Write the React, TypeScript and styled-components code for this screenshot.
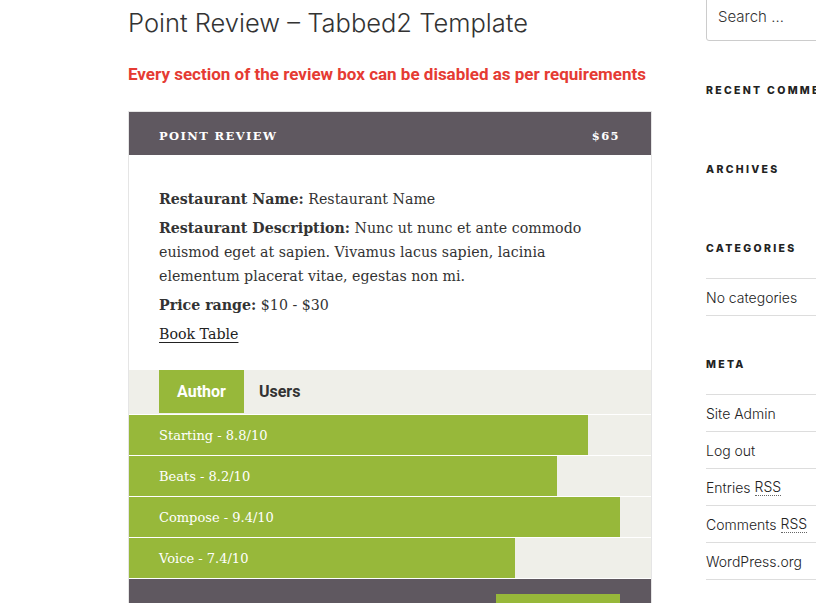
import React from "react";
import styled, { createGlobalStyle } from "styled-components";

const Global = createGlobalStyle`
  html, body { margin: 0; padding: 0; background: #fff; }
  body { overflow: hidden; }
  * { box-sizing: border-box; }
`;

const slab = `"DejaVu Serif", "Liberation Serif", serif`;
const franklin = `Inter, "Noto Sans", sans-serif`;

const Page = styled.div`
  display: grid;
  grid-template-columns: 524px 1fr;
  column-gap: 54px;
  padding-left: 128px;
  width: 816px;
  height: 603px;
  overflow: hidden;
`;

const Main = styled.main`
  display: flex;
  flex-direction: column;
`;

const Title = styled.h1`
  margin: 6px 0 0;
  font-family: ${franklin};
  font-weight: 300;
  font-size: 25.5px;
  line-height: 34px;
  color: #333;
`;

const Notice = styled.p`
  margin: 24px 0 0;
  font-family: Roboto, sans-serif;
  font-weight: 700;
  font-size: 17px;
  line-height: 21px;
  color: #e53b33;
  white-space: nowrap;
`;

const Box = styled.section`
  margin-top: 26px;
  border: 1px solid #e5e5e5;
  display: flex;
  flex-direction: column;
`;

const Header = styled.div`
  background: #5f5860;
  height: 43px;
  display: flex;
  align-items: center;
  justify-content: space-between;
  padding: 4px 31px 0 30px;
  color: #fff;
  font-family: ${slab};
  font-weight: 700;
  font-size: 11.5px;
  letter-spacing: 1.4px;
`;

const Body = styled.div`
  padding: 32px 30px 19px;
  font-family: ${slab};
  font-size: 14.2px;
  line-height: 24px;
  color: #333;
`;

const Line = styled.p`
  margin: 0 0 5px;
  b { font-weight: 700; color: #333; }
`;

const BookLink = styled.a`
  color: #222;
  text-decoration: underline;
  text-underline-offset: 3px;
`;

const TabBar = styled.div`
  background: #efefe9;
  display: flex;
  padding-left: 30px;
  height: 44px;
`;

const Tab = styled.div<{ $active?: boolean }>`
  display: flex;
  align-items: center;
  padding: 0 ${(p) => (p.$active ? 18 : 15)}px;
  height: 43px;
  font-family: Roboto, sans-serif;
  font-weight: 700;
  font-size: 16px;
  color: ${(p) => (p.$active ? "#fff" : "#333")};
  background: ${(p) => (p.$active ? "#97b83a" : "transparent")};
`;

const Bars = styled.div`
  display: flex;
  flex-direction: column;
  gap: 1px;
  background: #fff;
  padding-top: 1px;
`;

const Track = styled.div`
  background: #efefe9;
  height: 40px;
`;

const Fill = styled.div`
  background: #97b83a;
  height: 100%;
  display: flex;
  align-items: center;
  padding-left: 30px;
  color: #fff;
  font-family: ${slab};
  font-size: 13px;
  white-space: nowrap;
`;

const Footer = styled.div`
  margin-top: 1px;
  background: #5f5860;
  height: 60px;
  display: flex;
  justify-content: flex-end;
  padding: 15px 31px 0 0;
`;

const Button = styled.div`
  width: 124px;
  height: 40px;
  background: #97b83a;
`;

const Side = styled.aside`
  display: flex;
  flex-direction: column;
  font-family: ${franklin};
`;

const Search = styled.div`
  margin-top: -10px;
  height: 51px;
  border: 1px solid #ccc;
  border-radius: 3px;
  margin-right: -20px;
  padding: 16px 0 0 11px;
  font-size: 15px;
  color: #333;
  font-weight: 300;
`;

const Widget = styled.div<{ $top: number }>`
  margin-top: ${(p) => p.$top}px;
`;

const WidgetTitle = styled.h2`
  margin: 0;
  font-size: 10.5px;
  font-weight: 800;
  letter-spacing: 2.3px;
  color: #222;
  text-transform: uppercase;
  line-height: 14px;
  white-space: nowrap;
`;

const List = styled.ul`
  list-style: none;
  margin: 22px 0 0;
  padding: 0;
  border-top: 1px solid #ddd;
`;

const Item = styled.li`
  height: 37px;
  border-bottom: 1px solid #ddd;
  display: flex;
  align-items: center;
  font-size: 14px;
  font-weight: 300;
  color: #222;
  white-space: nowrap;
`;

const Abbr = styled.abbr`
  text-decoration: none;
  border-bottom: 1px dotted #666;
  margin-left: 4px;
`;

const bars = [
  { label: "Starting - 8.8/10", v: 88 },
  { label: "Beats - 8.2/10", v: 82 },
  { label: "Compose - 9.4/10", v: 94 },
  { label: "Voice - 7.4/10", v: 74 },
];

export default function App() {
  return (
    <>
      <Global />
      <Page>
        <Main>
          <Title>Point Review – Tabbed2 Template</Title>
          <Notice>Every section of the review box can be disabled as per requirements</Notice>
          <Box>
            <Header>
              <span>POINT REVIEW</span>
              <span>$65</span>
            </Header>
            <Body>
              <Line>
                <b>Restaurant Name:</b> Restaurant Name
              </Line>
              <Line>
                <b>Restaurant Description:</b> Nunc ut nunc et ante commodo euismod eget at sapien. Vivamus lacus
                sapien, lacinia elementum placerat vitae, egestas non mi.
              </Line>
              <Line>
                <b>Price range:</b> $10 - $30
              </Line>
              <Line>
                <BookLink>Book Table</BookLink>
              </Line>
            </Body>
            <TabBar>
              <Tab $active>Author</Tab>
              <Tab>Users</Tab>
            </TabBar>
            <Bars>
              {bars.map((b) => (
                <Track key={b.label}>
                  <Fill style={{ width: `${b.v}%` }}>{b.label}</Fill>
                </Track>
              ))}
            </Bars>
            <Footer>
              <Button />
            </Footer>
          </Box>
        </Main>
        <Side>
          <Search>Search …</Search>
          <Widget $top={43}>
            <WidgetTitle>Recent Comments</WidgetTitle>
          </Widget>
          <Widget $top={65}>
            <WidgetTitle>Archives</WidgetTitle>
          </Widget>
          <Widget $top={65}>
            <WidgetTitle>Categories</WidgetTitle>
            <List>
              <Item>No categories</Item>
            </List>
          </Widget>
          <Widget $top={42}>
            <WidgetTitle>Meta</WidgetTitle>
            <List>
              <Item>Site Admin</Item>
              <Item>Log out</Item>
              <Item>
                Entries<Abbr>RSS</Abbr>
              </Item>
              <Item>
                Comments<Abbr>RSS</Abbr>
              </Item>
              <Item>WordPress.org</Item>
            </List>
          </Widget>
        </Side>
      </Page>
    </>
  );
}
